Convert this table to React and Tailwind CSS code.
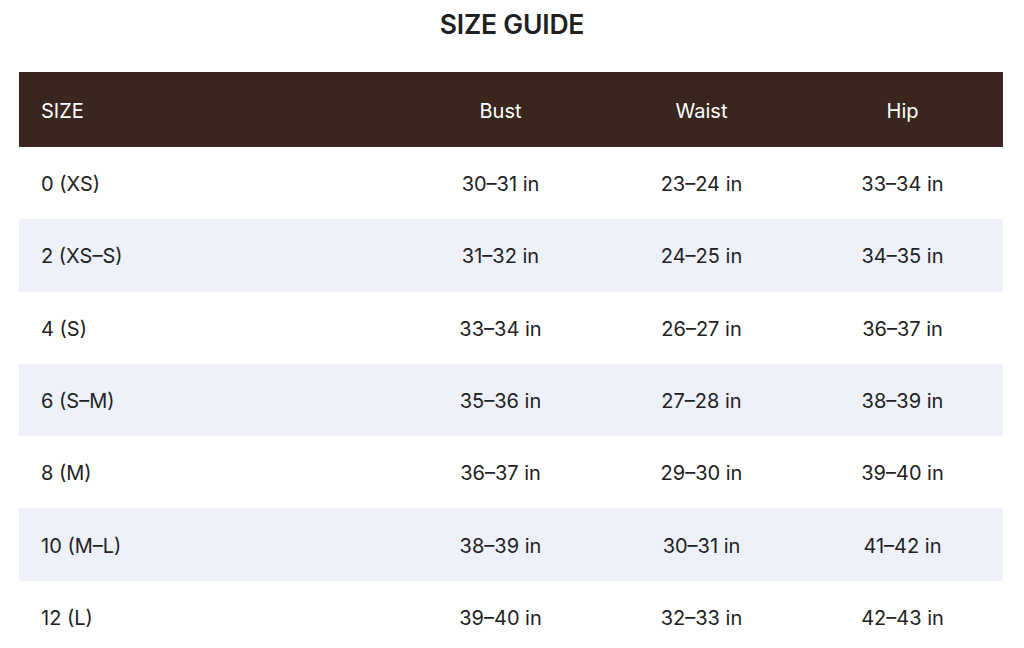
const rows = [
  ["0 (XS)", "30–31 in", "23–24 in", "33–34 in"],
  ["2 (XS–S)", "31–32 in", "24–25 in", "34–35 in"],
  ["4 (S)", "33–34 in", "26–27 in", "36–37 in"],
  ["6 (S–M)", "35–36 in", "27–28 in", "38–39 in"],
  ["8 (M)", "36–37 in", "29–30 in", "39–40 in"],
  ["10 (M–L)", "38–39 in", "30–31 in", "41–42 in"],
  ["12 (L)", "39–40 in", "32–33 in", "42–43 in"],
];

export default function App() {
  return (
    <div
      className="w-[1024px] h-[648px] overflow-hidden bg-white text-[#222]"
      style={{ fontFamily: "Inter, 'Noto Sans', sans-serif" }}
    >
      <div className="h-[48px] pt-[2px] flex items-center justify-center">
        <h1 className="text-[26.5px] font-semibold tracking-[-0.2px] text-[#1f1f1f]">SIZE GUIDE</h1>
      </div>
      <div className="mt-[24px] ml-[19px] w-[984px]">
        <div className="grid grid-cols-[381px_1fr_1fr_1fr] h-[75px] pt-[3px] bg-[#38261f] text-white text-[20px] items-center">
          <div className="pl-[22px]">SIZE</div>
          <div className="text-center">Bust</div>
          <div className="text-center">Waist</div>
          <div className="text-center">Hip</div>
        </div>
        {rows.map((r, i) => (
          <div
            key={i}
            className={`grid grid-cols-[381px_1fr_1fr_1fr] h-[72.3px] pt-[2px] items-center text-[20px] ${
              i % 2 === 1 ? "bg-[#eef1fa]" : "bg-white"
            }`}
          >
            <div className="pl-[22px]">{r[0]}</div>
            <div className="text-center">{r[1]}</div>
            <div className="text-center">{r[2]}</div>
            <div className="text-center">{r[3]}</div>
          </div>
        ))}
      </div>
    </div>
  );
}
